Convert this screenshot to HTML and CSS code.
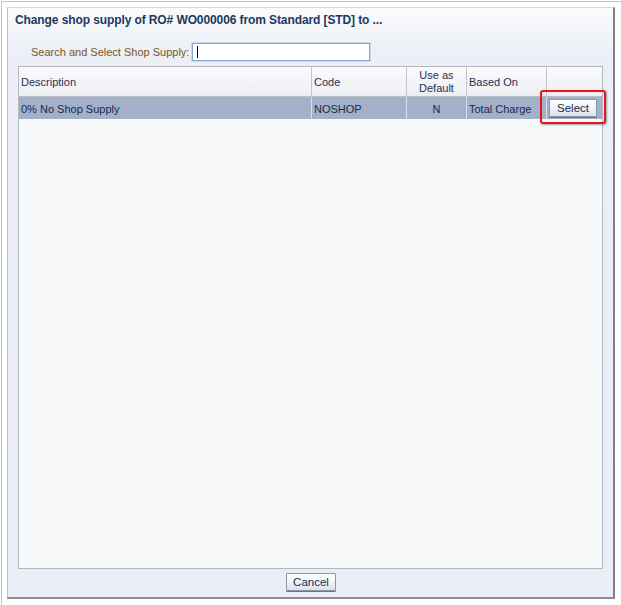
FILE: index.html
```html
<!DOCTYPE html>
<html>
<head>
<meta charset="utf-8">
<link rel="stylesheet" href="styles.css">
</head>
<body>
<div class="frame">
  <div class="dialog">
    <div class="title">Change shop supply of RO# WO000006 from Standard [STD] to ...</div>
    <div class="search">
      <label class="search-label" for="q">Search and Select Shop Supply:</label>
      <div class="input"><span class="caret"></span></div>
    </div>
    <div class="grid">
      <div class="row head">
        <div class="cell">Description</div>
        <div class="cell">Code</div>
        <div class="cell center">Use as<br>Default</div>
        <div class="cell">Based On</div>
        <div class="cell last"></div>
      </div>
      <div class="row data">
        <div class="cell">0% No Shop Supply</div>
        <div class="cell">NOSHOP</div>
        <div class="cell center">N</div>
        <div class="cell">Total Charge</div>
        <div class="cell last btn-cell"><span class="btn select">Select</span></div>
      </div>
      <div class="highlight"></div>
    </div>
    <div class="footer"><span class="btn cancel">Cancel</span></div>
  </div>
</div>
</body>
</html>
```

FILE: styles.css
```css
html, body {
  margin: 0;
  padding: 0;
  background: #ffffff;
}
body {
  font-family: "Liberation Sans", Arial, sans-serif;
  font-size: 11px;
  color: #1f2d4d;
}
.frame {
  margin: 1px 0 0 1px;
  width: 611px;
  height: 597px;
  border: 1px solid #c4c4c4;
  padding: 5px 3px 3px 5px;
  box-shadow: 1px 1px 1px rgba(0,0,0,0.25);
}
.dialog {
  box-sizing: border-box;
  width: 608px;
  height: 592px;
  border-left: 1px solid #b9bfc9;
  border-top: 1px solid #d4d8df;
  border-right: 2px solid #7d8088;
  border-bottom: 2px solid #8a8c92;
  background: linear-gradient(#fafbfd 0px, #eceff6 45px, #e9edf5 100%);
  display: flex;
  flex-direction: column;
}
.title {
  height: 24px;
  line-height: 24px;
  padding-left: 7px;
  font-weight: bold;
  font-size: 12px;
  letter-spacing: -0.1px;
  color: #1b3a5e;
  white-space: nowrap;
}
.search {
  margin-top: 11px;
  height: 18px;
  display: flex;
  align-items: center;
  padding-left: 23px;
  gap: 7px;
}
.search-label {
  color: #76581c;
  font-size: 11px;
  width: 154px;
  white-space: nowrap;
}
.input {
  box-sizing: border-box;
  width: 178px;
  height: 18px;
  background: #ffffff;
  border: 1px solid #84a6d8;
  box-shadow: 0 0 0 1px #c9d8ef;
  position: relative;
}
.caret {
  position: absolute;
  left: 4px;
  top: 2px;
  width: 1px;
  height: 12px;
  background: #000;
}
.grid {
  position: relative;
  margin: 5px 10px 0 10px;
  height: 503px;
  box-sizing: border-box;
  border: 1px solid #b3b7be;
  background: #f8f9fb;
}
.row {
  display: grid;
  grid-template-columns: 293px 95px 60px 80px 55px;
}
.head {
  height: 30px;
  box-sizing: border-box;
  border-bottom: 1px solid #b9bdc4;
  background: linear-gradient(#fbfbfc, #eceef2);
}
.head .cell {
  border-right: 1px solid #c0c4cb;
  color: #2a2f55;
  padding: 1px 2px 0 2px;
  display: flex;
  align-items: center;
  line-height: 13px;
}
.data {
  height: 22px;
  background: #a2b0ca;
}
.data .cell {
  border-right: 1px solid #dae0ea;
  padding: 1px 2px 0 2px;
  display: flex;
  align-items: center;
  color: #1d2a48;
}
.cell.center {
  justify-content: center;
  text-align: center;
}
.cell.last {
  border-right: none;
}
.btn-cell {
  padding: 0 !important;
}
.btn {
  box-sizing: border-box;
  display: inline-flex;
  align-items: center;
  justify-content: center;
  height: 18px;
  border: 1px solid #8d97a8;
  border-radius: 1px;
  background: linear-gradient(#fefefe, #f0f2f6 50%, #dde2ea);
  box-shadow: 0 1px 0 #6d7585;
  color: #1d2e50;
  font-size: 11.5px;
}
.select {
  width: 48px;
  margin-left: 2px;
}
.highlight {
  position: absolute;
  left: 521px;
  top: 23px;
  width: 66px;
  height: 34px;
  box-sizing: border-box;
  border: 2px solid #e8141b;
  border-radius: 3px;
  box-shadow: 1px 1px 2px rgba(0,0,0,0.35);
}
.footer {
  margin-top: 4px;
  display: flex;
  justify-content: center;
}
.cancel {
  width: 50px;
  margin-left: 1px;
}
```
